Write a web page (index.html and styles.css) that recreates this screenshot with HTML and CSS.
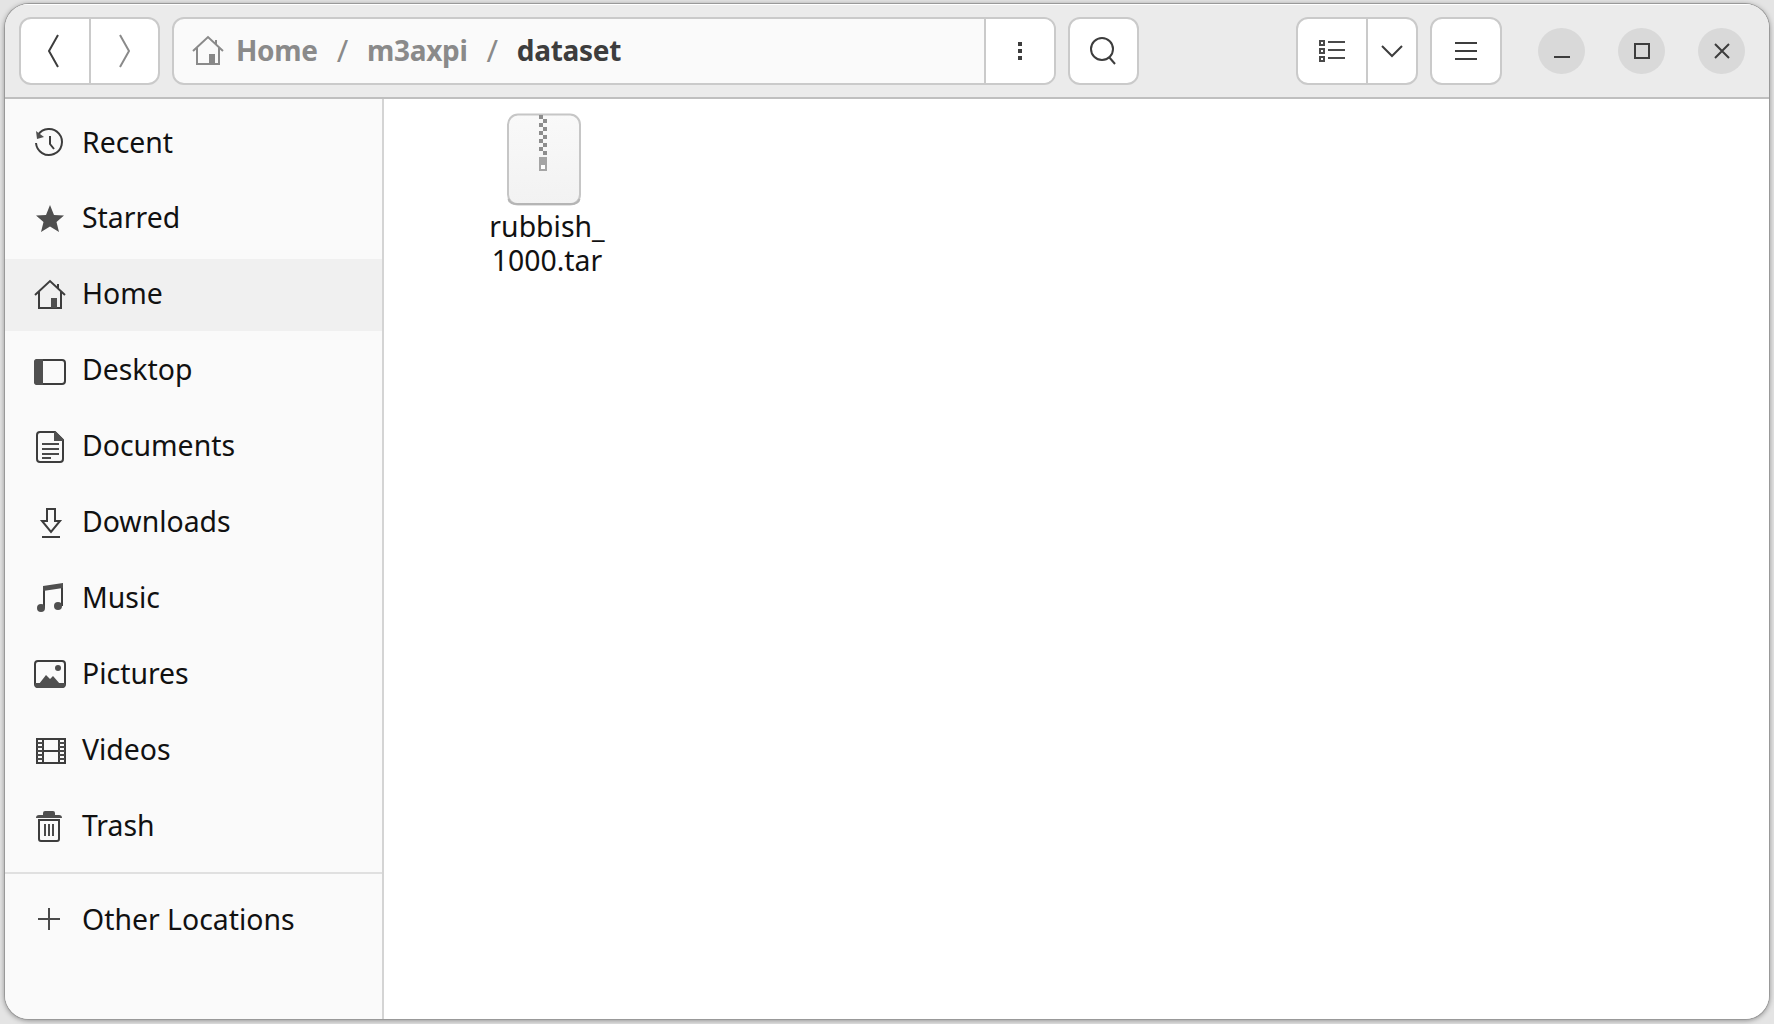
FILE: index.html
```html
<!DOCTYPE html>
<html lang="en">
<head>
    <meta charset="UTF-8">
    <title>dataset</title>
    <link rel="stylesheet" href="styles.css">
</head>
<body>

<div class="window">
    <header class="toolbar">
        <div class="group nav">
            <button class="btn nav-btn">
                <svg width="32" height="40" viewBox="0 0 32 40"><polyline points="19,4 10,20 19,36" class="line"/></svg>
            </button>
            <button class="btn nav-btn">
                <svg width="32" height="40" viewBox="0 0 32 40"><polyline points="12,4 21,20 12,36" class="line dim"/></svg>
            </button>
        </div>

        <div class="group path">
            <div class="crumbs">
                <svg class="crumb-home" width="32" height="32" viewBox="0 0 32 32"><path d="M1 16 16 2l15 14M5 13v16h22V13M24 5v5" class="line dim"/><rect x="17" y="19" width="6" height="10" fill="#888"/></svg>
                <span class="crumb">Home</span>
                <span class="sep">/</span>
                <span class="crumb">m3axpi</span>
                <span class="sep">/</span>
                <span class="crumb current">dataset</span>
            </div>
            <button class="btn kebab">
                <svg width="8" height="22" viewBox="0 0 8 22"><rect x="2" y="2" width="4" height="4"/><rect x="2" y="9" width="4" height="4"/><rect x="2" y="16" width="4" height="4"/></svg>
            </button>
        </div>

        <button class="btn single search">
            <svg width="32" height="32" viewBox="0 0 32 32"><circle cx="14" cy="14" r="11" class="line"/><path d="M21 22l6 7" class="line"/></svg>
        </button>

        <div class="group view">
            <button class="btn view-list">
                <svg width="26" height="24" viewBox="0 0 26 24">
                    <rect x="1" y="2" width="4" height="4" class="thin"/><rect x="1" y="10" width="4" height="4" class="thin"/><rect x="1" y="18" width="4" height="4" class="thin"/>
                    <path d="M9 3h17M9 11h17M9 19h17" class="thin"/>
                </svg>
            </button>
            <button class="btn view-more">
                <svg width="24" height="14" viewBox="0 0 24 14"><polyline points="2,2 12,12 22,2" class="line"/></svg>
            </button>
        </div>

        <button class="btn single menu">
            <svg width="24" height="22" viewBox="0 0 24 22"><path d="M1 3h22M1 11h22M1 19h22" class="line"/></svg>
        </button>

        <div class="wm">
            <button class="wm-btn"><svg width="18" height="18" viewBox="0 0 18 18"><path d="M1 15h16" class="line"/></svg></button>
            <button class="wm-btn"><svg width="18" height="18" viewBox="0 0 18 18"><rect x="2" y="2" width="14" height="14" class="line"/></svg></button>
            <button class="wm-btn"><svg width="18" height="18" viewBox="0 0 18 18"><path d="M2 2l14 14M16 2 2 16" class="line"/></svg></button>
        </div>
    </header>

    <div class="main">
        <nav class="sidebar">
            <ul class="places">
                <li class="place">
                    <svg viewBox="0 0 32 32"><path d="M4 8a13 13 0 1 1-2 8" class="line"/><path d="M2 4l1 8 7-2z" class="fill"/><path d="M16 9v8l4 5" class="line"/></svg>
                    <span class="place-name">Recent</span>
                </li>
                <li class="place">
                    <svg viewBox="0 0 32 32"><polygon points="16,2 20,12 30,12.500 22.500,19 25,29 16,23.500 7,29 9.500,19 2,12.500 12,12" class="fill"/></svg>
                    <span class="place-name">Starred</span>
                </li>
                <li class="place active">
                    <svg viewBox="0 0 32 32"><path d="M1 16 16 2l15 14M5 13v16h22V13M24 5v5" class="line"/><rect x="17" y="19" width="6" height="10" class="fill"/></svg>
                    <span class="place-name">Home</span>
                </li>
                <li class="place">
                    <svg viewBox="0 0 32 32"><rect x="1" y="5" width="30" height="24" rx="3" class="line"/><path d="M3 4h6v26H3a3 3 0 0 1-3-3V7a3 3 0 0 1 3-3z" class="fill"/></svg>
                    <span class="place-name">Desktop</span>
                </li>
                <li class="place">
                    <svg viewBox="0 0 32 32"><path d="M6 1h15l8 8v19a3 3 0 0 1-3 3H6a3 3 0 0 1-3-3V4a3 3 0 0 1 3-3z" class="line"/><path d="M20 1h2l7 7v2h-9z" class="fill"/><path d="M8 13h17M8 18h17M8 23h17M8 27h9" class="thin"/></svg>
                    <span class="place-name">Documents</span>
                </li>
                <li class="place">
                    <svg viewBox="0 0 32 32"><path d="M13 3h8v12h5l-9 11-9-11h5z" class="line"/><path d="M8 31h18" class="line"/></svg>
                    <span class="place-name">Downloads</span>
                </li>
                <li class="place">
                    <svg viewBox="0 0 32 32"><path d="M10 26V6l18-3v21" class="line"/><path d="M9 4l20-3v5L9 9z" class="fill"/><circle cx="7" cy="26" r="4" class="fill"/><circle cx="24" cy="24" r="4" class="fill"/></svg>
                    <span class="place-name">Music</span>
                </li>
                <li class="place">
                    <svg viewBox="0 0 32 32"><rect x="1" y="3" width="30" height="26" rx="3" class="line"/><path d="M1 25h30v2a3 3 0 0 1-3 3H4a3 3 0 0 1-3-3z" class="fill"/><path d="M5 26l7-9 4 4 3-3 7 8z" class="fill"/><circle cx="24" cy="10" r="3" class="fill"/></svg>
                    <span class="place-name">Pictures</span>
                </li>
                <li class="place">
                    <svg viewBox="0 0 32 32"><rect x="3" y="5" width="28" height="24" class="line"/><path d="M9 5v24M25 5v24M9 17h16" class="line"/><path d="M3 9h6M3 13h6M3 17h6M3 21h6M3 25h6M25 9h6M25 13h6M25 17h6M25 21h6M25 25h6" class="thin"/></svg>
                    <span class="place-name">Videos</span>
                </li>
                <li class="place">
                    <svg viewBox="0 0 32 32"><path d="M5 10h20v19a2 2 0 0 1-2 2H7a2 2 0 0 1-2-2z" class="line"/><path d="M2 8q0-3 3-3h4V3q0-2 2-2h8q2 0 2 2v2h4q3 0 3 3z" class="fill"/><path d="M11 14v12M15 14v12M19 14v12" class="thin"/></svg>
                    <span class="place-name">Trash</span>
                </li>
            </ul>
            <div class="other">
                <div class="place">
                    <svg viewBox="0 0 32 32"><path d="M4 15h22M15 4v22" class="thin"/></svg>
                    <span class="place-name">Other Locations</span>
                </div>
            </div>
        </nav>

        <section class="files">
            <div class="file">
                <svg class="archive" width="76" height="94" viewBox="0 0 76 94">
                    <defs>
                        <linearGradient id="paper" x1="0" y1="0" x2="0" y2="1">
                            <stop offset="0" stop-color="#f9f9f9"/>
                            <stop offset="1" stop-color="#f2f2f2"/>
                        </linearGradient>
                    </defs>
                    <rect x="2" y="1.500" width="72" height="90" rx="10" fill="url(#paper)" stroke="#c6c6c6" stroke-width="2"/>
                    <path d="M2.500 86q1 5 9 5h53q8 0 9-5" fill="none" stroke="#b5b5b5" stroke-width="2"/>
                    <g fill="#8d8d8d">
                        <rect x="33" y="2" width="4" height="4"/><rect x="37" y="6" width="4" height="4"/>
                        <rect x="33" y="10" width="4" height="4"/><rect x="37" y="14" width="4" height="4"/>
                        <rect x="33" y="18" width="4" height="4"/><rect x="37" y="22" width="4" height="4"/>
                        <rect x="33" y="26" width="4" height="4"/><rect x="37" y="30" width="4" height="4"/>
                        <rect x="33" y="34" width="4" height="4"/><rect x="37" y="38" width="4" height="4"/>
                    </g>
                    <rect x="33" y="44" width="8" height="14" fill="#a5a5a5"/>
                    <rect x="35" y="52" width="4" height="4" fill="#fff"/>
                </svg>
                <div class="file-name">rubbish_<br>1000.tar</div>
            </div>
        </section>
    </div>
</div>

</body>
</html>
```
FILE: styles.css
```css
* {
    box-sizing: border-box;
}
body {
    margin: 0;
    padding: 4px 5px;
    height: 1024px;
    overflow: hidden;
    background-color: #e4e4e4;
    font-family: "Noto Sans", "Open Sans", sans-serif;
    color: #111;
}
button {
    font: inherit;
    padding: 0;
    margin: 0;
    border: none;
    background: none;
}
svg {
    display: block;
}
.window {
    width: 1764px;
    height: 1015px;
    display: flex;
    flex-direction: column;
    border-radius: 24px;
    overflow: hidden;
    background-color: #fff;
    box-shadow: 0 0 0 1px #999, 0 1px 5px 1px rgba(0, 0, 0, 0.35);
}

/* header */
.toolbar {
    flex: none;
    height: 95px;
    display: flex;
    align-items: center;
    padding: 0 24px 0 14px;
    background-color: #ebebeb;
    border-top: 1px solid #fff;
    border-bottom: 2px solid #bfbfbf;
}
.group, .single {
    height: 68px;
    display: flex;
    border: 2px solid #cacaca;
    border-radius: 12px;
    overflow: hidden;
    background-color: #fff;
}
.btn {
    display: flex;
    align-items: center;
    justify-content: center;
}
.nav {
    width: 141px;
}
.nav-btn {
    flex: 1;
}
.nav-btn + .nav-btn {
    border-left: 2px solid #cacaca;
}
.line {
    fill: none;
    stroke: #3d3d3d;
    stroke-width: 2;
}
.dim {
    stroke: #8a8a8a;
}
.thin {
    fill: none;
    stroke: #4a4a4a;
    stroke-width: 2;
}
.fill {
    fill: #4f4f4f;
}
.path {
    width: 884px;
    margin-left: 12px;
    background-color: #fafafa;
}
.crumbs {
    flex: 1;
    display: flex;
    align-items: center;
    padding: 0 0 3px 18px;
    font-size: 28px;
    font-weight: 700;
    letter-spacing: -0.3px;
    color: #8a8a8a;
}
.crumb-home {
    margin: 3px 12px 0 0;
}
.sep {
    margin: 0 19px;
    font-size: 31px;
    font-weight: 400;
}
.current {
    color: #3d3d3d;
}
.kebab {
    width: 70px;
    background-color: #fff;
    border-left: 2px solid #cacaca;
}
.kebab svg {
    fill: #3d3d3d;
}
.search {
    width: 71px;
    margin-left: 12px;
}
.view {
    width: 122px;
    margin-left: auto;
}
.view-list {
    flex: 1;
}
.view-more {
    width: 50px;
    border-left: 2px solid #cacaca;
}
.menu {
    width: 72px;
    margin-left: 12px;
}
.wm {
    display: flex;
    gap: 33px;
    margin-left: 36px;
}
.wm-btn {
    width: 47px;
    height: 46px;
    border-radius: 50%;
    background-color: #d9d9d9;
    display: flex;
    align-items: center;
    justify-content: center;
}

/* main area */
.main {
    flex: 1;
    display: flex;
    min-height: 0;
}
.sidebar {
    flex: none;
    width: 379px;
    padding-top: 8px;
    background-color: #fafafa;
    border-right: 2px solid #d4d4d4;
    font-size: 28.4px;
}
.places {
    list-style: none;
    margin: 0;
    padding: 0 0 10px;
    display: flex;
    flex-direction: column;
    gap: 3.9px;
}
.place {
    height: 72px;
    display: flex;
    align-items: center;
    gap: 16px;
    padding-left: 29px;
}
.place svg {
    flex: none;
    width: 32px;
    height: 32px;
}
.place-name {
    margin-bottom: 3px;
}
.place.active {
    background-color: #f0f0f0;
}
.other {
    border-top: 2px solid #e0e0e0;
    padding-top: 10px;
}
.files {
    flex: 1;
    padding: 13px 0 0 101px;
    background-color: #fff;
}
.file {
    width: 124px;
    display: flex;
    flex-direction: column;
    align-items: center;
}
.archive {
    flex: none;
    margin: 1px 6px 0 0;
}
.file-name {
    margin-top: 2px;
    text-align: center;
    font-size: 28.4px;
    line-height: 34px;
}
```
